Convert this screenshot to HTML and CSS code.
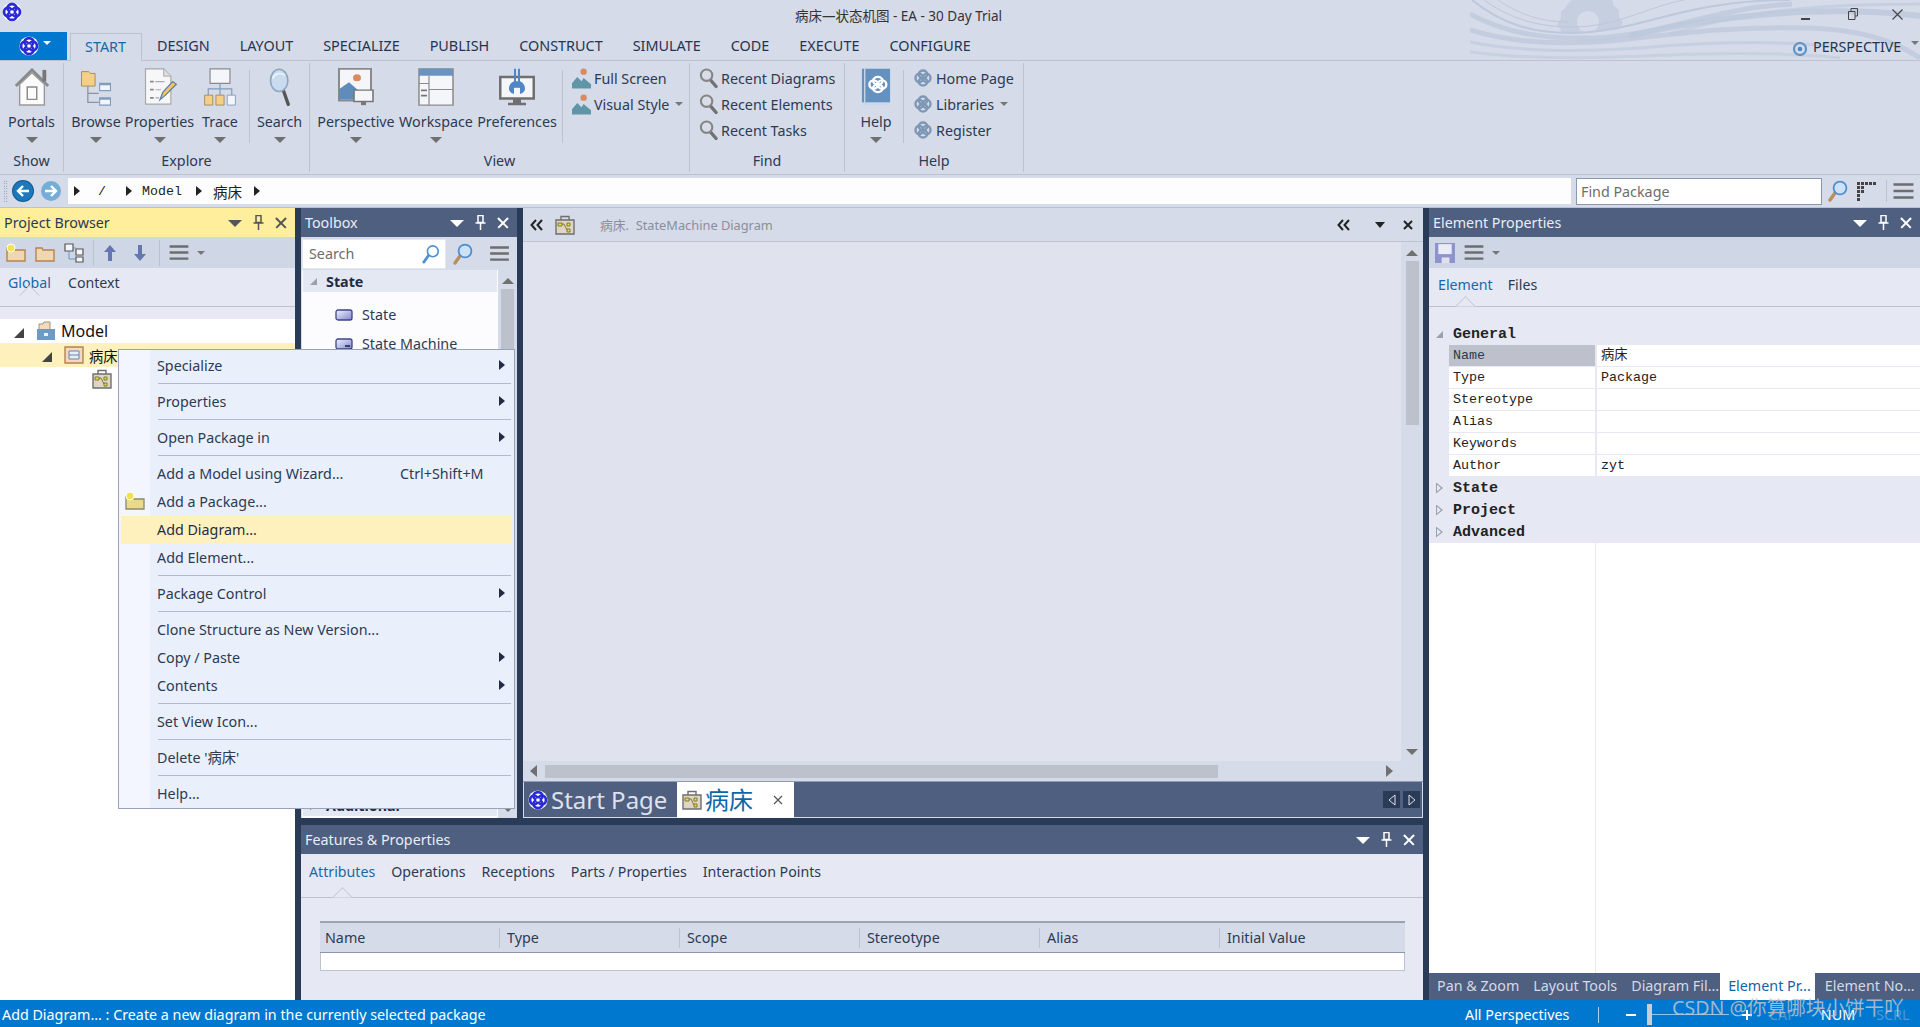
FILE: index.html
```html
<!DOCTYPE html>
<html lang="zh">
<head>
<meta charset="utf-8">
<title>病床—状态机图 - EA - 30 Day Trial</title>
<link rel="stylesheet" href="styles.css">
</head>
<body>
<svg class="defs" aria-hidden="true">
  <defs>
    <linearGradient id="stateg" x1="0" y1="0" x2="1" y2="1"><stop offset="0" stop-color="#f2f3fb"/><stop offset="1" stop-color="#7f86d0"/></linearGradient>
  </defs>
  <symbol id="knot" viewBox="0 0 24 24">
    <circle cx="12" cy="12" r="11.5" fill="#fff"/>
    <g fill="none" stroke="currentColor" stroke-width="3.3">
      <ellipse cx="12" cy="7.2" rx="5.4" ry="4.8"/>
      <ellipse cx="12" cy="16.8" rx="5.4" ry="4.8"/>
      <ellipse cx="7.2" cy="12" rx="4.8" ry="5.4"/>
      <ellipse cx="16.8" cy="12" rx="4.8" ry="5.4"/>
    </g>
    <circle cx="12" cy="12" r="2.2" fill="#fff"/>
  </symbol>
  <symbol id="knot-flat" viewBox="0 0 24 24">
    <g fill="none" stroke="currentColor" stroke-width="3.2">
      <ellipse cx="12" cy="7" rx="5.6" ry="5"/>
      <ellipse cx="12" cy="17" rx="5.6" ry="5"/>
      <ellipse cx="7" cy="12" rx="5" ry="5.6"/>
      <ellipse cx="17" cy="12" rx="5" ry="5.6"/>
    </g>
  </symbol>
  <symbol id="pin" viewBox="0 0 10 15">
    <path d="M2.500.500h5v7h-5zM0 8h10M5 8v7" fill="none" stroke="currentColor" stroke-width="1.500"/>
  </symbol>
  <symbol id="hamb" viewBox="0 0 20 16"><path d="M0 1.500h20M0 8h20M0 14.500h20" stroke="#6d6d6d" stroke-width="2.600"/></symbol>
  <symbol id="lens" viewBox="0 0 20 22">
    <path d="M7 13 2 20" stroke="#b98f5c" stroke-width="3.400" stroke-linecap="round"/>
    <circle cx="12" cy="8" r="6.400" fill="#cfe2f5" stroke="#4d8fd0" stroke-width="1.800"/>
  </symbol>
  <symbol id="lens-grey" viewBox="0 0 20 22">
    <path d="M12 13 18 20" stroke="#707070" stroke-width="3.400" stroke-linecap="round"/>
    <circle cx="8" cy="8" r="6" fill="#d9dde8" stroke="#858585" stroke-width="2.200"/>
  </symbol>
  <symbol id="person" viewBox="0 0 18 20">
    <circle cx="11" cy="4" r="3" fill="#d98b5f"/>
    <path d="M0 20V15L5 9l4 4 2-3 7 6v4z" fill="#5f95a6"/>
  </symbol>
  <symbol id="diagram" viewBox="0 0 20 20">
    <path d="M1 5h18v14H1z" fill="#e0d5c4" stroke="#6f6f6f" stroke-width="1.400"/>
    <path d="M6 5V1.500h8V5" fill="none" stroke="#6f6f6f" stroke-width="1.400"/>
    <path d="M5 9h4M12 8h3v3h-3zM12 14h3v3h-3zM9 9l3 6" stroke="#7a7a3a" fill="#e7df3e"/>
    <path d="M3 8h4v3H3z" fill="#e7df3e" stroke="#7a7a3a"/>
  </symbol>
  <symbol id="folder" viewBox="0 0 20 20">
    <path d="M1 18V5h6l1 2h11v11z" fill="#f1d6b2" stroke="#b5844f" stroke-width="1.400"/>
  </symbol>
</svg>

<header class="top">
  <svg class="swirl" viewBox="0 0 450 60" aria-hidden="true">
    <circle cx="118" cy="22" r="27" fill="#c6cfdf"/>
    <path d="M118-7l7 2 6-2 5 5 6 1 2 7 5 4 0 7 4 5-3 7 1 7-6 4-22 8-32-8 0-10-4-5 4-7 0-7 6-4 3-6 7-1 5-5z" fill="#c6cfdf"/>
    <circle cx="118" cy="22" r="11" fill="#d6dbe9"/>
    <path d="M0 0c30 22 60 33 100 33C170 33 210 0 320 0h130v60H0z" fill="#d6dbe9"/>
    <g fill="none" stroke="#bcc8dc">
      <path d="M2 0c30 24 60 33 98 33C170 33 210 0 320 0" stroke-width="2"/>
      <path d="M14 0c28 20 56 27 88 27 46 0 74-20 112-27" stroke-width="1"/>
      <path d="M28 0c22 15 44 22 70 22" stroke-width="1"/>
      <path d="M0 14c36 20 76 25 122 24 70-2 120-30 200-34" stroke-width="5" opacity=".75"/>
      <path d="M160 36c50-12 100-20 170-24 50-2 90 0 120 4" stroke-width="6" opacity=".8"/>
      <path d="M0 30c44 14 96 15 150 10 70-8 120-14 190-12 46 2 80 10 110 30" stroke-width="5" opacity=".7"/>
      <path d="M0 42c50 10 110 10 170 6 70-6 130-8 190-2" stroke-width="3" opacity=".6"/>
      <path d="M0 52c60 8 130 6 200 3 70-3 130-1 170 3" stroke-width="3" opacity=".55"/>
      <path d="M200 34c60-18 120-30 250-30" stroke-width="3" opacity=".6"/>
    </g>
  </svg>
  <div class="titlebar">
    <svg class="ico-app"><use href="#knot"/></svg>
    <div class="title">病床—状态机图 - EA - 30 Day Trial</div>
    <div class="winctl">
      <span class="win-min"></span>
      <svg class="win-res" viewBox="0 0 10 12"><path d="M3 3V.5h6.500V8H7M.5 3.500H7v8H.5z" fill="none" stroke="#444"/></svg>
      <svg class="win-x" viewBox="0 0 11 11"><path d="M.5.500l10 10M10.500.500l-10 10" stroke="#444" stroke-width="1.100"/></svg>
    </div>
  </div>
  <nav class="tabrow">
    <div class="appbtn"><svg class="ico-app2"><use href="#knot"/></svg><span class="caret-w"></span></div>
    <div class="rtab active">START</div>
    <div class="rtab">DESIGN</div>
    <div class="rtab">LAYOUT</div>
    <div class="rtab">SPECIALIZE</div>
    <div class="rtab">PUBLISH</div>
    <div class="rtab">CONSTRUCT</div>
    <div class="rtab">SIMULATE</div>
    <div class="rtab">CODE</div>
    <div class="rtab">EXECUTE</div>
    <div class="rtab">CONFIGURE</div>
    <div class="persp">
      <svg class="ico-persp" viewBox="0 0 14 14"><circle cx="7" cy="7" r="6" fill="none" stroke="#5f95c6" stroke-width="2.200"/><circle cx="7" cy="7" r="2.300" fill="#4f86bd"/></svg>
      <span>PERSPECTIVE</span><span class="caret-s up"></span>
    </div>
  </nav>
</header>

<section class="ribbon">
  <div class="group g-show">
    <div class="g-body">
      <div class="lbtn w-portals">
        <svg class="lico" viewBox="1 1 38 40"><path d="M3 20 20 3l17 17" fill="none" stroke="#8a8a8a" stroke-width="3"/><path d="M31 3h4v12h-4z" fill="#777"/><path d="M7 18 20 6l13 12v22H7z" fill="#fbfbfb" stroke="#9a9a9a" stroke-width="1.500"/><path d="M15 21h10v13H15z" fill="#fbfbfb" stroke="#8a8a8a" stroke-width="1.500"/></svg>
        <span>Portals</span><i class="caret"></i>
      </div>
    </div>
    <div class="g-label">Show</div>
  </div>
  <div class="group g-explore">
    <div class="g-body">
      <div class="lbtn w-browse">
        <svg class="lico" viewBox="0 0 34 42"><path d="M1 4h8l2 2h5v14H1z" fill="#f5cf86" stroke="#9f8a5e"/><path d="M8 20v18h12M8 28h12" fill="none" stroke="#8a93a3" stroke-width="1.400"/><path d="M21 17h12v8H21zM21 33h12v8H21z" fill="#f3f5fb" stroke="#7f9cbb" stroke-width="1.200"/><path d="M21 17h12v2H21zM21 33h12v2H21z" fill="#7f9cbb"/></svg>
        <span>Browse</span><i class="caret"></i>
      </div>
      <div class="lbtn w-props">
        <svg class="lico" viewBox="0 0 36 42"><path d="M2 1h20l8 8v31H2z" fill="#f7f7f9" stroke="#a8a8a8" stroke-width="1.300"/><path d="M22 1v8h8" fill="#ddd" stroke="#a8a8a8"/><path d="M7 15h4M7 24h4M7 33h4" stroke="#888" stroke-width="2"/><path d="M13 15h10M13 24h6M13 33h4" stroke="#aaa" stroke-width="1.300"/><path d="m18 35 3-8 11-12 4 3-12 12z" fill="#f3c55f" stroke="#5f7ea6" stroke-width="1.400"/></svg>
        <span>Properties</span><i class="caret"></i>
      </div>
      <div class="lbtn w-trace">
        <svg class="lico" viewBox="0 0 36 42"><path d="M7 1h22v16H7z" fill="#f5f6fa" stroke="#8a8a8a" stroke-width="1.300"/><path d="M18 17v6M5 30v-7h26v7M18 23v7" fill="none" stroke="#7f9cbb" stroke-width="1.300"/><path d="M1 30h9v11H1zM13.500 30h9v11h-9z" fill="#f5cf86" stroke="#9f8a5e"/><path d="M26 30h9v11h-9z" fill="#f3f5fb" stroke="#7f9cbb"/></svg>
        <span>Trace</span><i class="caret"></i>
      </div>
      <div class="vsep"></div>
      <div class="lbtn w-search">
        <svg class="lico" viewBox="0 0 26 46"><path d="M17 27l6 17" stroke="#555" stroke-width="4" stroke-linecap="round"/><ellipse cx="12" cy="15" rx="10.500" ry="13.500" fill="#c8dbef" stroke="#8ea6be" stroke-width="2"/><path d="M4 13c3-7 10-8 15-4" fill="none" stroke="#eef4fb" stroke-width="2"/></svg>
        <span>Search</span><i class="caret"></i>
      </div>
    </div>
    <div class="g-label">Explore</div>
  </div>
  <div class="group g-view">
    <div class="g-body">
      <div class="lbtn w-view">
        <svg class="lico wide" viewBox="0 2 36 43" preserveAspectRatio="none"><path d="M1 3h32v36H1z" fill="#f5f6fa" stroke="#8a8a8a" stroke-width="2"/><circle cx="19" cy="13" r="4" fill="#d98b5f"/><path d="M1 38V26l10-8 10 10v10z" fill="#5f8cbb"/><path d="M16 27h19v13H16z" fill="#f5f6fa" stroke="#777" stroke-width="1.600"/><path d="M23 40h5v4h-5z" fill="#777"/></svg>
        <span>Perspective</span><i class="caret"></i>
      </div>
      <div class="lbtn w-view">
        <svg class="lico wide" viewBox="0 2 36 44" preserveAspectRatio="none"><path d="M1 3h34v42H1z" fill="#f5f6fa" stroke="#8a8a8a" stroke-width="1.500"/><path d="M1 3h34v8H1z" fill="#6a93bf"/><path d="M11 11v34M11 27h24M1 20h10" stroke="#8a8a8a" stroke-width="1.200"/><path d="M3 27h6v2H3zM3 33h6v2H3z" fill="#777"/></svg>
        <span>Workspace</span><i class="caret"></i>
      </div>
      <div class="lbtn w-pref">
        <svg class="lico wide" viewBox="0 0 36 46" preserveAspectRatio="none"><path d="M1 11h34v26H1z" fill="#f5f6fa" stroke="#6f6f6f" stroke-width="3"/><path d="M14 37h8v5h-8zM9 42h18v3H9z" fill="#6f6f6f"/><path d="M15 1h2v15h2V1h2v15c4 2 5 6 5 9 0 4-4 7-8 7s-8-3-8-7c0-3 1-7 5-9z" fill="#4f86c6"/><path d="M15 24h6v9h-6z" fill="#f5f6fa"/></svg>
        <span>Preferences</span>
      </div>
      <div class="vsep s-view"></div>
      <div class="slist">
        <div class="sitem"><svg class="sico"><use href="#person"/></svg>Full Screen</div>
        <div class="sitem"><svg class="sico"><use href="#person"/></svg>Visual Style<span class="caret-s"></span></div>
      </div>
    </div>
    <div class="g-label">View</div>
  </div>
  <div class="group g-find">
    <div class="g-body">
      <div class="slist find">
        <div class="sitem"><svg class="sico"><use href="#lens-grey"/></svg>Recent Diagrams</div>
        <div class="sitem"><svg class="sico"><use href="#lens-grey"/></svg>Recent Elements</div>
        <div class="sitem"><svg class="sico"><use href="#lens-grey"/></svg>Recent Tasks</div>
      </div>
    </div>
    <div class="g-label">Find</div>
  </div>
  <div class="group g-help">
    <div class="g-body">
      <div class="lbtn w-help">
        <svg class="lico book" viewBox="0 1 32 45" preserveAspectRatio="none"><path d="M1 2h30v40H1z" fill="#6491bf"/><path d="M1 42h30v3H1z" fill="#c9d8ea"/><path d="M4 2v40" stroke="#dce6f2" stroke-width="1.200"/><g fill="none" stroke="#fff" stroke-width="2.600"><ellipse cx="18" cy="16" rx="5" ry="4.500"/><ellipse cx="18" cy="25" rx="5" ry="4.500"/><ellipse cx="13.500" cy="20.500" rx="4.500" ry="5"/><ellipse cx="22.500" cy="20.500" rx="4.500" ry="5"/></g></svg>
        <span>Help</span><i class="caret"></i>
      </div>
      <div class="vsep s-help"></div>
      <div class="slist help">
        <div class="sitem"><svg class="sico k"><use href="#knot-flat"/></svg>Home Page</div>
        <div class="sitem"><svg class="sico k"><use href="#knot-flat"/></svg>Libraries<span class="caret-s"></span></div>
        <div class="sitem"><svg class="sico k"><use href="#knot-flat"/></svg>Register</div>
      </div>
    </div>
    <div class="g-label">Help</div>
  </div>
</section>

<section class="pathbar">
  <div class="grip"></div>
  <div class="navbtn back"><svg viewBox="0 0 20 20"><path d="M16 10H5M10 5l-5 5 5 5" fill="none" stroke="#fff" stroke-width="2.400"/></svg></div>
  <div class="navbtn fwd"><svg viewBox="0 0 20 20"><path d="M4 10h11M10 5l5 5-5 5" fill="none" stroke="#fff" stroke-width="2.400"/></svg></div>
  <div class="crumbs">
    <i class="tri"></i><span class="c-root">/</span><i class="tri"></i><span class="c-model">Model</span><i class="tri"></i><span class="c-cn">病床</span><i class="tri"></i>
  </div>
  <div class="findbox">Find Package</div>
  <svg class="path-lens"><use href="#lens"/></svg>
  <svg class="path-grid" viewBox="0 0 19 19"><path d="M0 0h3v3H0zM4 0h3v3H4zM8 0h3v3H8zM12 0h3v3h-3zM16 0h3v3h-3zM0 4h3v3H0zM4 4h3v3H4zM0 8h3v3H0zM4 8h3v3H4zM0 12h3v3H0zM0 16h3v3H0z" fill="#444"/></svg>
  <div class="path-sep"></div>
  <svg class="path-hamb"><use href="#hamb"/></svg>
</section>

<main class="work">
  <aside class="panel browser">
    <div class="phead focus"><span>Project Browser</span>
      <div class="ctls dark"><i class="c-arrow"></i><svg class="c-pin"><use href="#pin"/></svg><i class="c-x"></i></div>
    </div>
    <div class="ptool">
      <svg class="ti" viewBox="0 0 20 20"><path d="M1 18V5h6l1 2h11v11z" fill="#f1d6b2" stroke="#b5844f" stroke-width="1.400"/><circle cx="5" cy="5" r="4" fill="#f3e25a" stroke="#fff"/></svg>
      <svg class="ti"><use href="#folder"/></svg>
      <svg class="ti" viewBox="0 0 20 20"><path d="M1 1h8v7H1zM12 6h7v6h-7zM12 14h7v5h-7z" fill="#f5f6fa" stroke="#555" stroke-width="1.200"/><path d="M5 8v8h7M9 5h3" fill="none" stroke="#6a93bf"/></svg>
      <div class="tsep"></div>
      <svg class="ta" viewBox="0 0 14 16"><path d="M7 0l6 7H9v9H5V7H1z" fill="#6577b0"/></svg>
      <svg class="ta" viewBox="0 0 14 16"><path d="M7 16l6-7H9V0H5v9H1z" fill="#6577b0"/></svg>
      <div class="tsep"></div>
      <svg class="th"><use href="#hamb"/></svg><span class="caret-s"></span>
    </div>
    <div class="subtabs sb-browser"><span class="st active">Global</span><span class="st">Context</span></div>
    <div class="tree">
      <div class="trow r-model"><i class="twist"></i><svg class="ti" viewBox="0 0 20 20"><path d="M1 8h18v11H1z" fill="#6e9bc4"/><path d="M3 8V3h4l1-2h6v7" fill="#eedcc2" stroke="#a8906e"/><path d="M8 12h4v3H8z" fill="#eef2f8"/></svg><span>Model</span></div>
      <div class="trow r-pkg"><i class="twist"></i><svg class="ti" viewBox="0 0 20 20"><path d="M1 2h18v16H1z" fill="#f2d9bf" stroke="#b5844f" stroke-width="1.400"/><path d="M5 6h10v8H5z" fill="#e9edf6" stroke="#6a85ad"/><path d="M5 10h10" stroke="#6a85ad"/></svg><span>病床</span></div>
      <div class="trow r-dia"><svg class="ti"><use href="#diagram"/></svg></div>
    </div>
  </aside>

  <div class="center">
    <div class="upper">
      <section class="panel toolbox">
        <div class="phead"><span>Toolbox</span>
          <div class="ctls"><i class="c-arrow"></i><svg class="c-pin"><use href="#pin"/></svg><i class="c-x"></i></div>
        </div>
        <div class="tbsearch">
          <div class="tbinput"><span>Search</span><svg class="tbl" viewBox="0 0 20 22"><path d="M7 13 2 20" stroke="#4d8fd0" stroke-width="3" stroke-linecap="round"/><circle cx="12" cy="8" r="6" fill="#fff" stroke="#4d8fd0" stroke-width="1.800"/></svg></div>
          <svg class="tblens"><use href="#lens"/></svg>
          <svg class="th"><use href="#hamb"/></svg>
        </div>
        <div class="tbbody">
          <div class="tblist">
            <div class="tbgroup"><i class="twist-s"></i>State</div>
            <div class="tbitem i-first"><svg viewBox="0 0 18 12"><rect x="1" y="1" width="16" height="10" rx="2" fill="url(#stateg)" stroke="#3d4585" stroke-width="1.300"/></svg>State</div>
            <div class="tbitem"><svg viewBox="0 0 18 12"><rect x="1" y="1" width="16" height="10" rx="2" fill="url(#stateg)" stroke="#3d4585" stroke-width="1.300"/><path d="M10 8h5" stroke="#222" stroke-width="1.500"/></svg>State Machine</div>
            <div class="tbspacer"></div>
            <div class="tbgroup end"><i class="twist-o"></i>Additional</div>
          </div>
          <div class="vscroll tbscroll"><i class="up"></i><b></b><i class="dn"></i></div>
        </div>
      </section>
      <section class="panel doc">
        <div class="dochead">
          <svg class="dchev" viewBox="0 0 14 12"><path d="M6 1 1.500 6 6 11M12 1 7.500 6l4.500 5" fill="none" stroke="#222" stroke-width="2"/></svg>
          <svg class="dicon"><use href="#diagram"/></svg>
          <span class="dtitle">病床.&nbsp; StateMachine Diagram</span>
          <svg class="dchev r" viewBox="0 0 14 12"><path d="M6 1 1.500 6 6 11M12 1 7.500 6l4.500 5" fill="none" stroke="#222" stroke-width="2"/></svg>
          <i class="dcaret"></i>
          <svg class="dx" viewBox="0 0 10 10"><path d="M1 1l8 8M9 1l-8 8" stroke="#222" stroke-width="2"/></svg>
        </div>
        <div class="docmid">
          <div class="canvas"></div>
          <div class="vscroll dscroll"><i class="up"></i><b></b><i class="dn"></i></div>
        </div>
        <div class="hscroll"><i class="lf"></i><b></b><i class="rt"></i></div>
        <div class="doctabs">
          <div class="dtab"><svg class="dt-ico"><use href="#knot"/></svg>Start Page</div>
          <div class="dtab active"><svg class="dt-ico"><use href="#diagram"/></svg>病床<svg class="dt-x" viewBox="0 0 10 10"><path d="M1 1l8 8M9 1l-8 8" stroke="#555" stroke-width="1.200"/></svg></div>
          <div class="dnav">
            <span><svg viewBox="0 0 8 12"><path d="M7 1 1 6l6 5z" fill="none" stroke="#e0e3ee"/></svg></span>
            <span><svg viewBox="0 0 8 12"><path d="M1 1l6 5-6 5z" fill="none" stroke="#e0e3ee"/></svg></span>
          </div>
        </div>
      </section>
    </div>
    <section class="panel features">
      <div class="phead"><span>Features &amp; Properties</span>
        <div class="ctls"><i class="c-arrow"></i><svg class="c-pin"><use href="#pin"/></svg><i class="c-x"></i></div>
      </div>
      <div class="subtabs sb-feat"><span class="st active">Attributes</span><span class="st">Operations</span><span class="st">Receptions</span><span class="st">Parts / Properties</span><span class="st">Interaction Points</span></div>
      <div class="ftable">
        <div class="fhead"><span>Name</span><span>Type</span><span>Scope</span><span>Stereotype</span><span>Alias</span><span>Initial Value</span></div>
        <div class="frow"></div>
      </div>
    </section>
  </div>

  <aside class="panel props">
    <div class="phead"><span>Element Properties</span>
      <div class="ctls"><i class="c-arrow"></i><svg class="c-pin"><use href="#pin"/></svg><i class="c-x"></i></div>
    </div>
    <div class="ptool">
      <svg class="ti save" viewBox="0 0 18 18"><path d="M0 0h18v18H0z" fill="#8f93cc"/><path d="M3 1h12v9H3z" fill="#e9ecf7"/><path d="M6 13h7v5H6z" fill="#dfe2ee"/></svg>
      <svg class="th"><use href="#hamb"/></svg><span class="caret-s"></span>
    </div>
    <div class="subtabs sb-props"><span class="st active">Element</span><span class="st">Files</span></div>
    <div class="pgrid">
      <div class="pgroup"><i class="twist-s"></i>General</div>
      <div class="prow sel"><span>Name</span><span>病床</span></div>
      <div class="prow"><span>Type</span><span>Package</span></div>
      <div class="prow"><span>Stereotype</span><span></span></div>
      <div class="prow"><span>Alias</span><span></span></div>
      <div class="prow"><span>Keywords</span><span></span></div>
      <div class="prow"><span>Author</span><span>zyt</span></div>
      <div class="pgroup"><i class="twist-o"></i>State</div>
      <div class="pgroup"><i class="twist-o"></i>Project</div>
      <div class="pgroup"><i class="twist-o"></i>Advanced</div>
      <div class="pblank"></div>
    </div>
    <div class="btabs">
      <span class="bt">Pan &amp; Zoom</span><span class="bt">Layout Tools</span><span class="bt">Diagram Fil...</span><span class="bt active">Element Pr...</span><span class="bt">Element No...</span>
    </div>
  </aside>
</main>

<footer class="status">
  <span class="st-msg">Add Diagram... : Create a new diagram in the currently selected package</span>
  <span class="st-all">All Perspectives</span>
  <i class="st-sep"></i>
  <i class="st-minus"></i>
  <div class="slider"><b></b></div>
  <i class="st-plus"></i>
  <span class="st-cap">CAP</span>
  <span class="st-num">NUM</span>
  <span class="st-scrl">SCRL</span>
  <span class="wm">CSDN @你算哪块小饼干吖</span>
</footer>

<div class="menu">
  <div class="mi sub">Specialize</div><div class="ms"></div>
  <div class="mi sub">Properties</div><div class="ms"></div>
  <div class="mi sub">Open Package in</div><div class="ms"></div>
  <div class="mi">Add a Model using Wizard...<span class="key">Ctrl+Shift+M</span></div>
  <div class="mi"><svg class="mico" viewBox="0 0 20 20"><path d="M1 18V6h7l1 2h10v10z" fill="#ecd98a" stroke="#8a8a6a" stroke-width="1.300"/><circle cx="5" cy="5" r="4" fill="#efe04f" stroke="#fff"/></svg>Add a Package...</div>
  <div class="mi hot">Add Diagram...</div>
  <div class="mi">Add Element...</div><div class="ms"></div>
  <div class="mi sub">Package Control</div><div class="ms"></div>
  <div class="mi">Clone Structure as New Version...</div>
  <div class="mi sub">Copy / Paste</div>
  <div class="mi sub">Contents</div><div class="ms"></div>
  <div class="mi">Set View Icon...</div><div class="ms"></div>
  <div class="mi">Delete '病床'</div><div class="ms"></div>
  <div class="mi">Help...</div>
</div>
</body>
</html>
```

FILE: styles.css
```css
* { box-sizing: border-box; }
html, body { margin: 0; padding: 0; }
body {
  width: 1920px; height: 1027px; overflow: hidden; position: relative;
  display: flex; flex-direction: column;
  background: #2a3b58; color: #2c3a52;
  font: 14.3px "Noto Sans", "Noto Sans CJK SC", sans-serif;
}
i { display: block; font-style: normal; }
.defs { position: absolute; width: 0; height: 0; }

/* header */
.top { position: relative; background: #d6dbe9; height: 61px; flex: none; }
.swirl { position: absolute; right: 0; top: 0; width: 450px; height: 60px; }
.titlebar { position: relative; height: 32px; display: flex; align-items: center; }
.ico-app { width: 20px; height: 20px; margin: -8px 0 0 2px; color: #2a2bd6; }
.title { position: absolute; left: 795px; top: 6px; font-size: 13.5px; line-height: 20px; color: #333; }
.winctl { margin-left: auto; display: flex; align-items: center; }
.win-min { width: 9px; height: 2px; background: #444; position: absolute; left: 1801px; top: 18px; }
.win-res { width: 10px; height: 12px; position: absolute; left: 1848px; top: 8px; }
.win-x { width: 11px; height: 11px; position: absolute; left: 1892px; top: 9px; }
.tabrow { position: relative; height: 29px; display: flex; align-items: stretch; border-bottom: 1px solid #bcc2d0; }
.appbtn { width: 67px; height: 28px; background: #0078cf; display: flex; align-items: center; padding-left: 19px; gap: 4px; }
.ico-app2 { width: 20px; height: 20px; color: #2a2bd6; }
.caret-w { border: 4px solid transparent; border-top: 4px solid #fff; border-bottom: 0; margin-top: -6px; }
.rtab { padding: 0 15px; line-height: 27px; color: #24344f; font-size: 14.4px; white-space: nowrap; }
.rtab.active { margin: 1px 0 -1px 3px; padding: 0 14px; width: 72px; line-height: 26px; background: #d6dbe9; border: 1px solid #bcc2d0; border-bottom: 0; color: #1868a8; height: 28px; }
.persp { position: absolute; left: 1793px; top: 4px; display: flex; align-items: center; gap: 6px; font-size: 14.3px; color: #24344f; line-height: 22px; }
.ico-persp { width: 14px; height: 14px; margin-top: 3px; }
.caret-s { display: inline-block; border: 4px solid transparent; border-top: 4px solid #777; border-bottom: 0; margin-left: 6px; vertical-align: middle; }
.caret-s.up { margin: -8px 0 0 4px; }

/* ribbon */
.ribbon { height: 114px; flex: none; display: flex; background: #d6dbe9; border-bottom: 1px solid #bcc2d0; padding-top: 2px; color: #2c3a52; }
.group { display: flex; flex-direction: column; height: 109px; border-right: 1px solid #bcc2d0; }
.g-show { width: 64px; }
.g-explore { width: 246px; }
.g-view { width: 380px; }
.g-find { width: 155px; }
.g-help { width: 179px; }
.g-body { height: 88px; flex: none; display: flex; }
.g-label { height: 21px; line-height: 20px; text-align: center; white-space: nowrap; }
.lbtn { display: flex; flex-direction: column; align-items: center; height: 88px; white-space: nowrap; }
.lico { height: 38px; width: 40px; margin-top: 5px; flex: none; }
.lico.wide { width: 36px; }
.lico.book { width: 30px; }
.lbtn span { line-height: 20px; height: 20px; margin-top: 6px; }
.caret { flex: none; border: 6px solid transparent; border-top: 6px solid #707070; border-bottom: 0; margin-top: 5px; }
.w-portals { width: 63px; }
.w-browse { width: 64px; }
.w-props { width: 63px; }
.w-trace { width: 58px; }
.w-search { width: 59px; }
.w-view { width: 80px; }
.w-pref { width: 82px; }
.w-help { width: 62px; }
.g-view .w-view:first-child { margin-left: 6px; }
.vsep { width: 1px; height: 73px; margin-top: 7px; background: #bcc2d0; flex: none; }
.s-view { margin-left: 4px; }
.s-help { margin-left: -4px; }
.slist { display: flex; flex-direction: column; padding-top: 2px; }
.g-view .slist { margin-left: 9px; }
.slist.find { margin-left: 9px; }
.slist.help { margin-left: 10px; }
.sitem { height: 26px; display: flex; align-items: center; white-space: nowrap; }
.sico { width: 19px; height: 22px; margin-right: 3px; flex: none; }
.sico.k { color: #7d97b5; width: 18px; height: 18px; margin-right: 4px; }

/* path bar */
.pathbar { height: 33px; flex: none; display: flex; align-items: center; background: #d6dbe9; border-bottom: 1px solid #bcc2d0; position: relative; }
.grip { width: 5px; height: 22px; margin-left: 3px; background-image: radial-gradient(#777 40%, transparent 45%); background-size: 2.500px 2.500px; }
.navbtn { width: 20px; height: 20px; border-radius: 50%; flex: none; }
.navbtn svg { display: block; width: 20px; height: 20px; }
.back { margin-left: 5px; background: #1d79bb; box-shadow: 0 0 0 1px #155c90; }
.fwd { margin-left: 8px; background: #74aed6; }
.crumbs { width: 1503px; height: 26px; margin-left: 7px; background: #fdfdfd; display: flex; align-items: center; font: 13.300px "Liberation Mono", "Noto Sans CJK SC", monospace; color: #222; flex: none; padding-left: 6px; }
.tri { width: 0; height: 0; border: 5px solid transparent; border-left: 6px solid #222; border-right: 0; flex: none; }
.c-root { margin: 0 20px 0 18px; }
.c-model { margin: 0 14px 0 10px; }
.c-cn { margin: 0 12px 0 11px; font-size: 14.500px; }
.findbox { width: 246px; height: 27px; margin-left: 5px; background: #fff; border: 1px solid #8a97ad; line-height: 25px; padding-left: 4px; color: #6d6d6d; flex: none; }
.path-lens { width: 20px; height: 22px; margin-left: 6px; flex: none; }
.path-grid { width: 19px; height: 19px; margin-left: 9px; flex: none; }
.path-sep { width: 1px; height: 22px; background: #bcc2d0; margin-left: 10px; flex: none; }
.path-hamb { width: 21px; height: 16px; margin-left: 6px; flex: none; }

/* work area */
.work { flex: 1; min-height: 0; display: grid; grid-template-columns: 295px 1122px 491px; column-gap: 6px; background: #2a3b58; }
.panel { display: flex; flex-direction: column; min-height: 0; min-width: 0; }
.phead { height: 29px; flex: none; background: #4e5f80; color: #e9edf5; display: flex; align-items: center; padding-left: 4px; }
.phead.focus { background: #ffee9c; color: #2c3a52; }
.ctls { margin-left: auto; display: flex; padding-right: 2px; align-items: center; color: #fff; }
.ctls.dark { color: #555; }
.ctls i { width: 23px; height: 16px; position: relative; }
.c-arrow::after { content: ""; position: absolute; left: 4px; top: 5px; border: 7px solid transparent; border-top: 7px solid #fff; border-bottom: 0; }
.c-pin { width: 23px; height: 15px; flex: none; }
.c-x::before, .c-x::after { content: ""; position: absolute; left: 4px; top: 7px; width: 14px; height: 1.600px; background: #fff; transform: rotate(45deg); }
.c-x::after { transform: rotate(-45deg); }
.dark .c-arrow::after { border-top-color: #555; }
.dark .c-x::before, .dark .c-x::after { background: #555; }
.ptool { height: 31px; flex: none; background: #cfd6e6; display: flex; align-items: center; padding-left: 6px; }
.ti { width: 20px; height: 20px; flex: none; margin-right: 9px; }
.tsep { width: 1px; height: 26px; background: #bcc2d0; margin: 0 9px 0 0; flex: none; }
.ta { width: 14px; height: 16px; margin-right: 16px; flex: none; }
.ta + .tsep { margin-left: -4px; margin-right: 9px; }
.th { width: 20px; height: 15px; flex: none; }
.ptool .caret-s { margin-left: 8px; }
.subtabs { height: 39px; flex: none; background: #e6e9f4; border-bottom: 1px solid #bcc2d0; display: flex; padding-left: 8px; gap: 16px; white-space: nowrap; font-size: 14.2px; }
.st { position: relative; color: #2c3a52; line-height: 20px; height: 20px; }
.st.active { color: #1868a8; }
.st.active::after { content: ""; position: absolute; left: 50%; margin-left: -7px; bottom: -22px; width: 14px; height: 14px; background: #e6e9f4; border-left: 1px solid #bcc2d0; border-top: 1px solid #bcc2d0; transform: rotate(45deg); z-index: 1; clip-path: polygon(0 0, 100% 0, 0 100%); }
.sb-browser { padding-top: 5px; height: 51px; border: 0; position: relative; gap: 17px; }
.sb-browser::after { content: ""; position: absolute; left: 0; right: 0; top: 38px; height: 1px; background: #bcc2d0; }
.sb-browser .st.active::after { bottom: -10px; }
.tree { flex: 1; background: #fff; }
.trow { height: 24px; display: flex; align-items: center; font-size: 16px; color: #111; white-space: nowrap; }
.r-model { padding-left: 14px; }
.r-pkg { padding-left: 42px; background: #fff1bd; font-size: 14.3px; }
.r-dia { padding-left: 92px; }
.twist { width: 0; height: 0; border-style: solid; border-width: 0 0 10px 10px; border-color: transparent transparent #444 transparent; margin: 3px 12px 0 0; flex: none; }
.trow .ti { margin-right: 5px; }
.center { display: flex; flex-direction: column; gap: 7px; min-height: 0; }
.upper { height: 610px; flex: none; display: flex; gap: 6px; }

/* toolbox */
.toolbox { width: 216px; flex: none; background: #d6dbe9; }
.tbsearch { height: 33px; flex: none; background: #d6dbe9; display: flex; align-items: center; padding-left: 1px; }
.tbinput { width: 144px; height: 30px; background: #fff; display: flex; align-items: center; padding: 0 5px 0 6px; color: #6d6d6d; flex: none; border: 1px solid #e4e8f3; }
.tbl { width: 18px; height: 20px; margin-left: auto; }
.tblens { width: 20px; height: 22px; margin-left: 7px; flex: none; }
.toolbox .th { margin-left: 16px; width: 21px; }
.tbbody { flex: 1; display: flex; min-height: 0; }
.tblist { width: 197px; margin-left: 1px; background: #fcfcfe; display: flex; flex-direction: column; padding: 0 1px; }
.tbgroup { height: 22px; background: #e4e8f3; font-weight: 700; display: flex; align-items: center; color: #1f2c44; flex: none; }
.tbgroup .twist-s, .tbgroup .twist-o { margin: 0 9px 0 7px; }
.twist-s { width: 0; height: 0; border-style: solid; border-width: 0 0 7px 7px; border-color: transparent transparent #99a0ae transparent; flex: none; }
.twist-o { width: 7px; height: 11px; background: #99a0ae; clip-path: polygon(0 0, 100% 50%, 0 100%); position: relative; flex: none; }
.twist-o::after { content: ""; position: absolute; left: 1px; top: 2px; width: 4px; height: 7px; background: #e6e9f4; clip-path: polygon(0 0, 100% 50%, 0 100%); }
.tbitem { height: 29px; display: flex; align-items: center; flex: none; }
.i-first { margin-top: 8px; }
.tbitem svg { width: 18px; height: 12px; margin: 0 9px 0 32px; }
.tbspacer { flex: 1; }
.tbgroup.end { margin-bottom: 2px; }
.vscroll { display: flex; flex-direction: column; align-items: center; background: #d6dbe9; flex: none; }
.vscroll .up { border: 6px solid transparent; border-bottom: 6px solid #707070; border-top: 0; margin-top: 8px; flex: none; }
.vscroll .dn { border: 6px solid transparent; border-top: 6px solid #707070; border-bottom: 0; margin-top: auto; margin-bottom: 6px; flex: none; }
.vscroll b { display: block; width: 13px; background: #bcc1cc; margin-top: 5px; flex: none; }
.tbscroll { width: 19px; }
.tbscroll b { height: 60px; }

/* document */
.doc { flex: 1; background: #d6dbe9; }
.dochead { height: 34px; flex: none; display: flex; align-items: center; background: #d6dbe9; border-bottom: 1px solid #bcc2d0; }
.dchev { width: 14px; height: 12px; margin-left: 7px; flex: none; }
.dchev.r { margin-left: auto; }
.dicon { width: 20px; height: 20px; margin-left: 11px; flex: none; }
.dtitle { margin-left: 25px; color: #8a8f9a; font-size: 12.8px; }
.dcaret { border: 5px solid transparent; border-top: 6px solid #222; border-bottom: 0; margin-left: 24px; }
.dx { width: 10px; height: 10px; margin: 0 10px 0 18px; flex: none; }
.docmid { flex: 1; display: flex; min-height: 0; }
.canvas { flex: 1; background: #e0e3ee; }
.dscroll { width: 22px; }
.dscroll b { height: 164px; }
.hscroll { height: 21px; flex: none; display: flex; align-items: center; background: #d6dbe9; border-bottom: 1px solid #8f9bb3; }
.hscroll .lf { border: 6px solid transparent; border-right: 7px solid #707070; border-left: 0; margin-left: 7px; flex: none; }
.hscroll b { display: block; width: 673px; height: 13px; background: #bcc1cc; margin-left: 8px; }
.hscroll .rt { border: 6px solid transparent; border-left: 7px solid #707070; border-right: 0; margin-left: auto; margin-right: 30px; flex: none; }
.doctabs { height: 36px; flex: none; display: flex; background: #4e5f80; border-bottom: 1px solid #d6dbe9; border-left: 1px solid #d6dbe9; border-right: 1px solid #d6dbe9; }
.dtab { display: flex; align-items: center; color: #dde2ec; font-size: 24px; white-space: nowrap; padding-left: 4px; width: 153px; line-height: 34px; }
.dt-ico { width: 20px; height: 20px; margin-right: 3px; flex: none; color: #2a2bd6; }
.dtab.active { width: 117px; background: #fff; color: #0d65a9; padding-left: 5px; margin-bottom: -1px; }
.dt-x { width: 10px; height: 10px; margin-left: 20px; }
.dnav { margin-left: auto; display: flex; gap: 3px; padding: 9px 2px 0 0; }
.dnav span { width: 17px; height: 17px; background: #2a3b58; display: flex; align-items: center; justify-content: center; }
.dnav svg { width: 8px; height: 12px; }

/* features */
.features { flex: 1; background: #e6e9f4; }
.sb-feat { height: 44px; padding-top: 8px; gap: 16px; }
.sb-feat .st.active::after { bottom: -23px; }
.ftable { margin: 23px 18px 0 19px; }
.fhead { height: 32px; background: #d6dbe9; border-top: 2px solid #9aa3b5; border-bottom: 1px solid #8a94ab; display: grid; grid-template-columns: 179px 180px 180px 180px 180px 1fr; align-items: center; }
.fhead span { padding-left: 7px; border-left: 1px solid #bcc2d0; line-height: 20px; }
.fhead span:first-child { padding-left: 5px; border-left: 0; }
.frow { height: 18px; background: #fff; border: 1px solid #bcc2d0; border-top: 0; }

/* properties */
.props { background: #fff; }
.sb-props { padding-top: 7px; padding-left: 9px; gap: 15px; }
.sb-props .st.active::after { bottom: -19px; }
.pgrid { flex: 1; min-height: 0; background: #e6e9f4; padding-top: 16px; font: 13.330px "Liberation Mono", "Noto Sans CJK SC", monospace; color: #222; display: flex; flex-direction: column; }
.pgroup { height: 22px; flex: none; display: flex; align-items: center; font-weight: 700; font-size: 15px; }
.pgroup .twist-s, .pgroup .twist-o { margin: 0 10px 0 7px; }
.prow { height: 22px; flex: none; margin-left: 20px; background: #fff; display: grid; grid-template-columns: 146px 1fr; border-bottom: 1px solid #e6e9f4; }
.prow span { padding-left: 4px; line-height: 21px; }
.prow span:last-child { border-left: 2px solid #e6e9f4; }
.prow.sel span:first-child { background: #bcc1cc; color: #2c3a52; }
.pblank { flex: 1; background: #fff; position: relative; }
.pblank::after { content: ""; position: absolute; left: 166px; top: 0; bottom: 0; width: 1px; background: #e6e9f4; }
.btabs { height: 27px; flex: none; background: #4e5f80; display: flex; align-items: center; color: #d4dae6; white-space: nowrap; padding-bottom: 2px; position: relative; }
.bt { margin-left: 8px; margin-right: 6px; }
.bt.active { background: #fff; color: #0d65a9; height: 27px; line-height: 26px; padding: 0 4px 0 8px; margin: 2px 0 0 -5px; }
.bt.active + .bt { margin-left: 10px; margin-right: 0; }

/* status */
.status { height: 27px; flex: none; background: #0078cf; color: #fff; display: flex; align-items: center; position: relative; padding: 2px 0 0 2px; white-space: nowrap; }
.st-msg { width: 1463px; }
.st-all { width: 133px; }
.st-sep { width: 1px; height: 16px; background: #a9d3ef; }
.st-minus { width: 10px; height: 2px; background: #fff; margin-left: 27px; }
.slider { width: 82px; height: 1px; background: #8ec5ea; margin-left: 11px; position: relative; }
.slider b { position: absolute; left: 0; top: -10px; width: 5px; height: 21px; background: #c9cdd6; }
.st-plus { width: 10px; height: 10px; margin-left: 13px; position: relative; }
.st-plus::before { content: ""; position: absolute; left: 0; top: 4px; width: 10px; height: 2px; background: #fff; }
.st-plus::after { content: ""; position: absolute; left: 4px; top: 0; width: 2px; height: 10px; background: #fff; }
.st-cap { margin-left: 17px; color: #4f9ad2; }
.st-num { margin-left: 25px; }
.st-scrl { margin-left: 21px; color: #4f9ad2; }
.wm { position: absolute; left: 1672px; top: -5px; font-size: 19.6px; line-height: 26px; color: rgba(190, 195, 205, .85); }

/* context menu */
.menu { position: absolute; left: 118px; top: 349px; width: 397px; height: 460px; background: linear-gradient(90deg, #f3f6fe 31px, #eaeffc 31px); border: 1px solid #9aa3b5; padding: 2px 2px 0; z-index: 5; }
.mi { height: 28px; position: relative; padding-left: 36px; line-height: 27px; white-space: nowrap; color: #2c3a52; font-size: 14.3px; }
.mi.hot { background: #fff1bd; color: #1f2c44; }
.mi.sub::after { content: ""; position: absolute; right: 7px; top: 8px; border: 5.500px solid transparent; border-left: 6px solid #1f2c44; border-right: 0; }
.key { position: absolute; left: 279px; }
.ms { height: 8px; margin-left: 37px; margin-right: 1px; position: relative; }
.ms::after { content: ""; position: absolute; left: 0; right: 0; top: 3px; height: 1px; background: #b4bac8; }
.mico { position: absolute; left: 4px; top: 3px; width: 20px; height: 20px; }
```
